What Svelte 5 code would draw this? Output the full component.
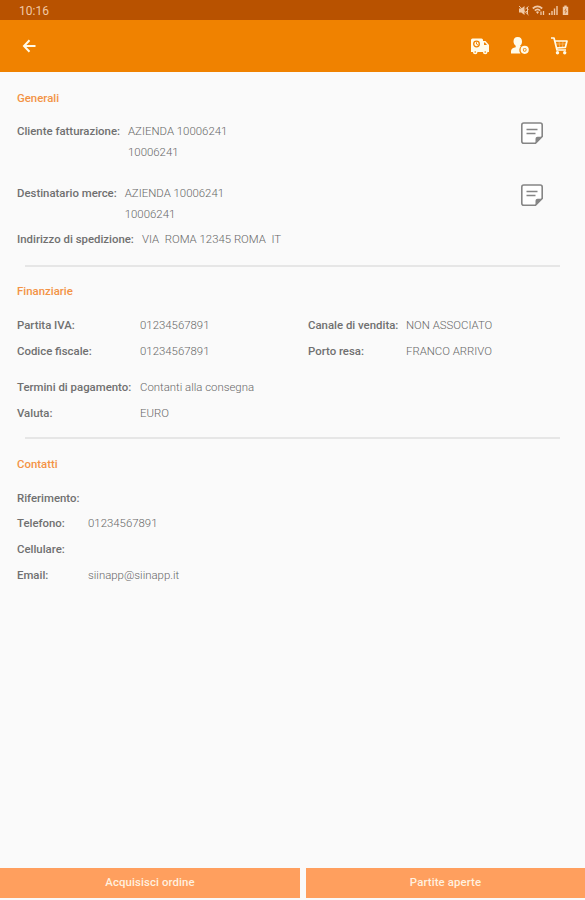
<script lang="ts">
    type Field = { label: string; value: string };

    const customers = [
        { label: 'Cliente fatturazione:', name: 'AZIENDA 10006241', code: '10006241' },
        { label: 'Destinatario merce:', name: 'AZIENDA 10006241', code: '10006241' }
    ];

    const fiscal: Field[] = [
        { label: 'Partita IVA:', value: '01234567891' },
        { label: 'Codice fiscale:', value: '01234567891' }
    ];

    const sales: Field[] = [
        { label: 'Canale di vendita:', value: 'NON ASSOCIATO' },
        { label: 'Porto resa:', value: 'FRANCO ARRIVO' }
    ];

    const payment: Field[] = [
        { label: 'Termini di pagamento:', value: 'Contanti alla consegna' },
        { label: 'Valuta:', value: 'EURO' }
    ];

    const contacts: Field[] = [
        { label: 'Riferimento:', value: '' },
        { label: 'Telefono:', value: '01234567891' },
        { label: 'Cellulare:', value: '' },
        { label: 'Email:', value: 'siinapp@siinapp.it' }
    ];
</script>

{#snippet fields(rows: Field[], kind: string)}
    <dl class="fields {kind}">
        {#each rows as row}
            <dt class="label">{row.label}</dt>
            <dd class="value">{row.value}</dd>
        {/each}
    </dl>
{/snippet}

<div class="screen">
    <div class="status">
        <span class="clock">10:16</span>
        <div class="status-icons">
            <svg width="12" height="11" viewBox="0 0 12 11">
                <path d="M1 3.500h2.300L6.500 1v9L3.300 7.500H1z" fill="currentColor" />
                <path d="M1 1l9.500 9M7.500 4l3-2.500M8 7l2.500-2.500M9.500 2v7" fill="none" stroke="currentColor" />
            </svg>
            <svg width="14" height="11" viewBox="0 0 14 11">
                <path d="M.8 3.500Q5.500-.8 10.200 3.500M2.800 5.700Q5.500 3.200 8.200 5.700" fill="none" stroke="currentColor" stroke-width="1.700" />
                <path d="M4 7q1.500-1.300 3 0L5.500 9z" fill="currentColor" />
                <path d="M9 10V6.500M11.500 6v4" stroke="currentColor" stroke-width="1.300" />
            </svg>
            <svg width="11" height="11" viewBox="0 0 11 11">
                <path d="M1.500 10V8M4 10V6M6.500 10V3.500M9 10V1" stroke="currentColor" stroke-width="1.400" />
            </svg>
            <svg width="9" height="11" viewBox="0 0 9 11">
                <path d="M3.300.5h2.400v1.300h1.500V10H1.800V1.800h1.500z" fill="currentColor" />
                <path d="M5 3.500L3.800 6h1.700L4.200 8.500" fill="none" stroke="#b85200" stroke-width=".6" />
            </svg>
        </div>
    </div>

    <header class="toolbar">
        <svg class="back" width="14" height="14" viewBox="0 0 14 14">
            <path d="M13.500 7H2M7.500 1.300L2 7l5.500 5.700" fill="none" stroke="currentColor" stroke-width="2" />
        </svg>
        <div class="actions">
            <svg width="20" height="18" viewBox="0 0 20 18">
                <path d="M2.500 1.500h9q1.500 0 1.500 1.500v1h2.500l3.500 4v7h-1.500a2.300 2.300 0 0 1-4.600 0H7.500a2.300 2.300 0 0 1-4.600 0H1V3q0-1.500 1.500-1.500z" fill="currentColor" />
                <path d="M14 5.500h1l2 2.500h-3z" fill="#f08200" />
                <circle cx="6.500" cy="7" r="2.800" fill="none" stroke="#f08200" stroke-width="1.300" />
                <path d="M6.500 5.300V7l1.300.8" fill="none" stroke="#f08200" />
                <circle cx="5.200" cy="15" r=".8" fill="#f08200" />
                <circle cx="15.200" cy="15" r=".8" fill="#f08200" />
            </svg>
            <svg width="20" height="20" viewBox="0 0 20 20">
                <path d="M7.700 1c-3 0-4.200 2-4.200 4.500 0 2 1 3.300 2.200 4.300v1.400C3 12 1 12.800 1 15v2.500h9.500a5.200 5.200 0 0 1 .5-7.200q-.8 0-1-.5C11.500 8.800 12 7.500 12 5.500 12 3 10.700 1 7.700 1z" fill="currentColor" />
                <circle cx="14.700" cy="13.800" r="3" fill="none" stroke="currentColor" stroke-width="2.200" />
                <path d="M14.700 12.700v2.200M13.600 13.800h2.200" stroke="currentColor" />
            </svg>
            <svg width="19" height="20" viewBox="0 0 19 20">
                <path d="M1 2h3l3 12h9M4.700 5H17l-1.600 6.300-9 .7" fill="none" stroke="currentColor" stroke-width="1.700" stroke-linejoin="round" />
                <path d="M5.500 8h10.700M9 5l.7 6.500M13 5l-.5 6.500" stroke="currentColor" stroke-width=".7" opacity=".5" />
                <circle cx="7.500" cy="16.700" r="1.700" fill="currentColor" />
                <circle cx="14.700" cy="16.700" r="1.700" fill="currentColor" />
            </svg>
        </div>
    </header>

    <main class="content">
        <section class="general">
            <h2 class="title">Generali</h2>
            {#each customers as customer}
                <div class="customer">
                    <span class="label">{customer.label}</span>
                    <div class="value lines">
                        <span>{customer.name}</span>
                        <span>{customer.code}</span>
                    </div>
                    <svg class="note" width="24" height="24" viewBox="0 0 24 24">
                        <path d="M3.800 2h16.400q2 0 2 2v11.500l-6.700 6.700H3.800q-2 0-2-2V4q0-2 2-2z" fill="#fff" stroke="#858585" stroke-width="1.600" />
                        <path d="M15.500 22v-4.200q0-2 2-2H22z" fill="#858585" />
                        <path d="M6.500 8.500h11M6.500 12.500h9" stroke="#858585" stroke-width="1.400" />
                    </svg>
                </div>
            {/each}
            <div class="address">
                <span class="label">Indirizzo di spedizione:</span>
                <span class="value">VIA&nbsp; ROMA 12345 ROMA&nbsp; IT</span>
            </div>
        </section>

        <section class="financial">
            <h2 class="title">Finanziarie</h2>
            <div class="columns">
                {@render fields(fiscal, 'wide')}
                {@render fields(sales, 'medium')}
            </div>
            {@render fields(payment, 'wide')}
        </section>

        <section class="contacts">
            <h2 class="title">Contatti</h2>
            {@render fields(contacts, 'narrow')}
        </section>
    </main>

    <footer class="buttons">
        <button>Acquisisci ordine</button>
        <button>Partite aperte</button>
    </footer>
</div>

<style>
    :global(body) {
        margin: 0;
        background: #fafafa;
    }
    .screen {
        display: flex;
        flex-direction: column;
        height: 900px;
        box-sizing: border-box;
        padding-bottom: 2px;
        font-family: Roboto, 'Liberation Sans', sans-serif;
        font-size: 11.4px;
        line-height: 20px;
        color: #777;
        background: #fafafa;
    }
    .status {
        display: flex;
        align-items: center;
        justify-content: space-between;
        height: 20px;
        padding: 0 15px 0 19px;
        color: #f1c9a6;
        background: #b85200;
    }
    .clock {
        padding-top: 2px;
        font-size: 12px;
    }
    .status-icons {
        display: flex;
        gap: 2px;
        padding-top: 1px;
    }
    .toolbar {
        display: flex;
        align-items: center;
        justify-content: space-between;
        height: 52px;
        padding: 0 16px 0 22px;
        color: #fffbe9;
        background: #f08200;
    }
    .actions {
        display: flex;
        align-items: center;
        gap: 20px;
    }
    .content {
        flex: 1;
        padding: 16px 17px 0;
    }
    .title {
        margin: 0 0 13.4px;
        font-size: 11.4px;
        font-weight: 500;
        color: #f39345;
    }
    .label {
        font-weight: 500;
        color: #707070;
    }
    .value {
        margin: 0;
        font-weight: 300;
        color: #676767;
    }
    .customer,
    .address {
        display: flex;
        gap: 8px;
    }
    .customer {
        height: 41px;
        margin-bottom: 20.5px;
    }
    .customer + .address {
        margin-top: -15.5px;
    }
    .lines {
        display: flex;
        flex: 1;
        flex-direction: column;
        gap: 1px;
    }
    .note {
        margin-right: 24px;
    }
    .general::after,
    .financial::after {
        display: block;
        height: 2px;
        margin: 16.6px 8px 14px;
        background: #e6e6e6;
        content: '';
    }
    .financial .title {
        margin-bottom: 14px;
    }
    .financial::after {
        margin-top: 14px;
        margin-bottom: 15.6px;
    }
    .columns {
        display: grid;
        grid-template-columns: 291px 1fr;
        margin-bottom: 16px;
    }
    .fields {
        display: grid;
        align-content: start;
        row-gap: 5.6px;
        margin: 0;
    }
    .wide {
        grid-template-columns: 123px 1fr;
    }
    .medium {
        grid-template-columns: 98px 1fr;
    }
    .narrow {
        grid-template-columns: 71px 1fr;
        row-gap: 5.8px;
    }
    .buttons {
        display: grid;
        grid-template-columns: 300px 1fr;
        gap: 6px;
    }
    button {
        height: 30px;
        padding: 0 0 3px;
        border: 0;
        font: inherit;
        font-weight: 500;
        line-height: 20px;
        letter-spacing: 0.1px;
        color: #fff0df;
        background: #ff9f5e;
    }
</style>
